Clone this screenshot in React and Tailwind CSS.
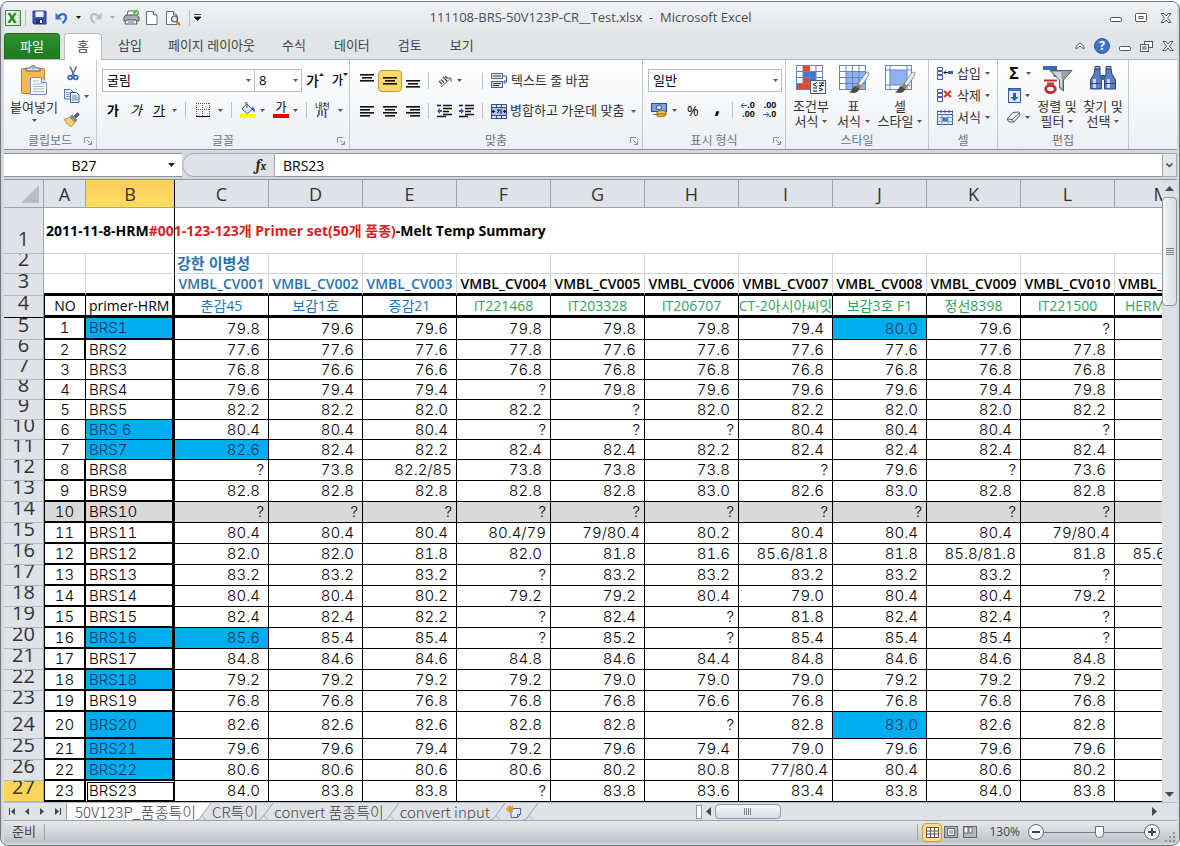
import React from 'react';

const COLUMNS = ['A', 'B', 'C', 'D', 'E', 'F', 'G', 'H', 'I', 'J', 'K', 'L', 'M'];

const LINES = ['001', '002', '003', '004', '005', '006', '007', '008', '009', '010', '011'];

const VARIETIES = ['춘감45', '보감1호', '증감21', 'IT221468', 'IT203328', 'IT206707', 'CT-2아시아씨잇', '보감3호 F1', '정선8398', 'IT221500', 'HERM'];

// name, highlighted, values for C..M ("*" marks a highlighted value)
const PRIMERS = [
  ['BRS1', true, '79.8 79.6 79.6 79.8 79.8 79.8 79.4 80.0* 79.6 ?'],
  ['BRS2', false, '77.6 77.6 77.6 77.8 77.6 77.6 77.6 77.6 77.6 77.8'],
  ['BRS3', false, '76.8 76.6 76.6 76.8 76.8 76.8 76.8 76.8 76.8 76.8'],
  ['BRS4', false, '79.6 79.4 79.4 ? 79.8 79.6 79.6 79.6 79.4 79.8'],
  ['BRS5', false, '82.2 82.2 82.0 82.2 ? 82.0 82.2 82.0 82.0 82.2'],
  ['BRS 6', true, '80.4 80.4 80.4 ? ? ? 80.4 80.4 80.4 ?'],
  ['BRS7', true, '82.6* 82.4 82.2 82.4 82.4 82.2 82.4 82.4 82.4 82.4'],
  ['BRS8', false, '? 73.8 82.2/85 73.8 73.8 73.8 ? 79.6 ? 73.6'],
  ['BRS9', false, '82.8 82.8 82.8 82.8 82.8 83.0 82.6 83.0 82.8 82.8'],
  ['BRS10', false, '? ? ? ? ? ? ? ? ? ?'],
  ['BRS11', false, '80.4 80.4 80.4 80.4/79 79/80.4 80.2 80.4 80.4 80.4 79/80.4'],
  ['BRS12', false, '82.0 82.0 81.8 82.0 81.8 81.6 85.6/81.8 81.8 85.8/81.8 81.8 85.6/81.8'],
  ['BRS13', false, '83.2 83.2 83.2 ? 83.2 83.2 83.2 83.2 83.2 ?'],
  ['BRS14', false, '80.4 80.4 80.2 79.2 79.2 80.4 79.0 80.4 80.4 79.2'],
  ['BRS15', false, '82.4 82.4 82.2 ? 82.4 ? 81.8 82.4 82.4 ?'],
  ['BRS16', true, '85.6* 85.4 85.4 ? 85.2 ? 85.4 85.4 85.4 ?'],
  ['BRS17', false, '84.8 84.6 84.6 84.8 84.6 84.4 84.8 84.6 84.6 84.8'],
  ['BRS18', true, '79.2 79.2 79.2 79.2 79.0 79.0 79.0 79.2 79.2 79.2'],
  ['BRS19', false, '76.8 76.8 76.8 76.8 76.8 76.6 76.8 76.8 76.8 76.8'],
  ['BRS20', true, '82.6 82.6 82.6 82.8 82.8 ? 82.8 83.0* 82.6 82.8'],
  ['BRS21', true, '79.6 79.6 79.4 79.2 79.6 79.4 79.0 79.6 79.6 79.6'],
  ['BRS22', true, '80.6 80.6 80.6 80.6 80.2 80.8 77/80.4 80.4 80.6 80.2'],
  ['BRS23', false, '84.0 83.8 83.8 ? 83.8 83.6 83.4 83.8 84.0 83.8'],
];

const rowHeight = (row) => {
  if (row === 5) return 'h-[22px]';
  if (row >= 6 && row <= 11) return 'h-[20px]';
  if (row === 24) return 'h-[27px]';
  return 'h-[21px]';
};

const Caret = ({ className = '', color = '#555' }) => (
  <svg className={`shrink-0 ${className}`} width="5" height="3" viewBox="0 0 5 3"><path d="M0 0h5L2.5 3z" fill={color} /></svg>
);

const Sep = ({ className = '' }) => <span className={`w-px h-4 shrink-0 bg-[#b9bfc8] ${className}`} />;

const IconButton = ({ label, className = '', caret, children }) => (
  <button type="button" aria-label={label} className={`flex items-center shrink-0 gap-1 ${className}`}>
    {children}
    {caret && <Caret />}
  </button>
);

/* ---------- icons ---------- */

const ExcelIcon = () => (
  <svg width="16" height="16" viewBox="0 0 16 16">
    <rect x=".5" y=".5" width="15" height="15" fill="#e8f3e4" stroke="#3c8a3c" />
    <rect x="10" y="2" width="4" height="12" fill="#fff" stroke="#8abf86" strokeWidth=".6" />
    <path d="M10 5h4M10 8h4M10 11h4" stroke="#8abf86" strokeWidth=".6" />
    <path d="M2.5 3h3l1.7 3L9 3h2.6L8.6 8l3.2 5H8.6L7 10 5.2 13H2.4l3.2-5z" fill="#2c8a35" />
  </svg>
);

const SaveIcon = () => (
  <svg width="15" height="15" viewBox="0 0 15 15">
    <path d="M1 1h12.5l.5 1v12H2l-1-1z" fill="#4259b8" stroke="#27348a" />
    <rect x="3.5" y="1.5" width="8" height="5.5" fill="#eef3ff" />
    <rect x="4" y="9" width="7" height="5" fill="#26337c" />
    <rect x="8" y="10" width="2" height="3" fill="#fff" />
  </svg>
);

const UndoIcon = ({ flip, color = '#3d6fc4' }) => (
  <svg width="13" height="13" viewBox="0 0 13 13" className={flip ? '-scale-x-100' : ''}>
    <path d="M3 6.5C5 2 11 2 11 6.5c0 2.5-1.500 4-3.500 5.500" fill="none" stroke={color} strokeWidth="2.400" />
    <path d="M.5 1.500v7h6.500z" fill={color} />
  </svg>
);

const PrintIcon = () => (
  <svg width="17" height="17" viewBox="0 0 17 17">
    <path d="M4 7l1-5h7l-1 5z" fill="#fff" stroke="#666" />
    <path d="M1 8l2-2h11l2 2v4H1z" fill="#a9adb5" stroke="#555" />
    <path d="M3 11h10l1 4H2z" fill="#fff" stroke="#555" />
    <path d="M4.500 13h7" stroke="#3d6fc4" />
    <circle cx="13" cy="4" r="3" fill="#58b04d" />
    <path d="M11.500 4l1.200 1.200L14.700 3" stroke="#fff" fill="none" />
  </svg>
);

const PageIcon = ({ search }) => (
  <svg width={search ? 15 : 12} height="16" viewBox={search ? '0 0 15 16' : '0 0 12 16'}>
    <path d="M.5 1.500h7l3.500 3.500v9.500H.5z" fill="#fff" stroke="#5d6f8c" />
    <path d="M7.500 1.500v3.500H11" fill="#d9e3f2" stroke="#5d6f8c" />
    {search && (
      <>
        <circle cx="8.500" cy="9" r="3" fill="#dbe9f8" stroke="#555" strokeWidth="1.200" />
        <path d="M10.700 11.300l3.300 3.700" stroke="#b57a32" strokeWidth="2" />
      </>
    )}
  </svg>
);

const PasteIcon = () => (
  <svg width="28" height="31" viewBox="0 0 28 31">
    <rect x="1.500" y="3.500" width="23" height="25" rx="1" fill="#efb95b" stroke="#b98734" />
    <path d="M6 6V3h4c0-3 6-3 6 0h4v3z" fill="#d7dbe2" stroke="#5f6674" />
    <circle cx="13" cy="2.700" r="1" fill="#fff" stroke="#5f6674" strokeWidth=".6" />
    <path d="M10.500 12.500h11l5 5v12h-16z" fill="#fff" stroke="#6d8fc0" />
    <path d="M21.500 12.500v5h5" fill="#dce8f7" stroke="#6d8fc0" />
    <path d="M13 16h6M13 19h11M13 21.500h11M13 24h11M13 26.500h11" stroke="#9db4d6" />
  </svg>
);

const CutIcon = () => (
  <svg width="12" height="15" viewBox="0 0 12 15">
    <path d="M3 .5l4.200 9M9.500 .5L5 9.500" stroke="#566a8c" strokeWidth="1.600" fill="none" />
    <circle cx="3.200" cy="11.500" r="2" fill="none" stroke="#2d5cb5" strokeWidth="1.600" />
    <circle cx="8.800" cy="11.500" r="2" fill="none" stroke="#2d5cb5" strokeWidth="1.600" />
  </svg>
);

const CopyIcon = () => (
  <svg width="16" height="14" viewBox="0 0 16 14">
    <path d="M.5 .5h6l2.500 2.500v7H.5z" fill="#fff" stroke="#4a76b8" />
    <path d="M2 3.500h4M2 5.500h5M2 7.500h5" stroke="#7fa0d2" />
    <path d="M6.500 3.500h6l2.500 2.500v7.500H6.500z" fill="#fff" stroke="#2d5ca8" />
    <path d="M8 7h5M8 9h6M8 11h6" stroke="#4a76b8" />
  </svg>
);

const BrushIcon = () => (
  <svg width="16" height="15" viewBox="0 0 16 15">
    <path d="M10 4l3.500-3.500 2 2L12 6z" fill="#4c5f9a" stroke="#333f70" strokeWidth=".6" />
    <path d="M8 3l5 5-2 2-5-5z" fill="#8a8f9c" stroke="#555" strokeWidth=".6" />
    <path d="M6 5.500L.5 7c1 4 4 7 7 7.500l3.500-4z" fill="#f1d469" stroke="#a1852c" strokeWidth=".8" />
  </svg>
);

const BorderIcon = () => (
  <svg width="14" height="14" viewBox="0 0 14 14">
    <path d="M.5 0v13M6.500 0v13M13.500 0v13M0 .5h14M0 6.500h14" stroke="#555" strokeDasharray="1 1" fill="none" shapeRendering="crispEdges" />
    <path d="M0 13.500h14" stroke="#000" />
  </svg>
);

const BucketIcon = () => (
  <svg width="16" height="16" viewBox="0 0 16 16">
    <path d="M6.500 2l6 5-5 4.500L2 7z" fill="#dfeaf8" stroke="#39598f" />
    <path d="M7 6V1.500C7 0 5 0 5 1.500" fill="none" stroke="#39598f" />
    <path d="M12 5c3 1 3 3 2.500 6-.8-2-1.500-3-3-3.500z" fill="#2d5cb5" />
    <rect y="12" width="16" height="4" fill="#ff0" />
  </svg>
);

const Lines = ({ rows, h = 13, w = 14 }) => (
  <svg width={w} height={h} viewBox={`0 0 ${w} ${h}`}>
    {rows.map(([x, y, len]) => <rect key={y} x={x} y={y} width={len} height="1.600" fill="#111" />)}
  </svg>
);

const IndentIcon = ({ right }) => (
  <svg width="15" height="14" viewBox="0 0 15 14">
    <path d="M0 1.500h4M6 1.500h9M6 4.500h9M6 7.500h6M6 10.500h9M0 12.500h9" stroke="#111" strokeWidth="1.500" />
    <path d={right ? 'M0 6h2V4l3 3-3 3V8H0z' : 'M5 6H3V4L0 7l3 3V8h2z'} fill="#2d5cb5" />
  </svg>
);

const OrientIcon = () => (
  <svg width="16" height="14" viewBox="0 0 16 14">
    <path d="M2 7l3 3M4 5.500l3 3M6 3l4 4M8 2l2.500 2.500" stroke="#444" strokeWidth="1.300" />
    <path d="M4 13L14 4M14 4v4M14 4h-4" stroke="#667" fill="none" />
  </svg>
);

const WrapIcon = () => (
  <svg width="17" height="16" viewBox="0 0 17 16">
    <rect x=".5" y=".5" width="11" height="5" fill="#dfe9f6" stroke="#52627f" />
    <rect x=".5" y="8.500" width="11" height="6" fill="#dfe9f6" stroke="#52627f" />
    <path d="M2 3h8M2 10.500h8M2 12.500h6" stroke="#333" />
    <path d="M12 3h3.500v6H13M14.500 7l-2 2 2 2" stroke="#2d5cb5" fill="none" />
  </svg>
);

const MergeIcon = () => (
  <svg width="16" height="15" viewBox="0 0 16 15">
    <rect x=".5" y=".5" width="15" height="14" fill="#dfe9f6" stroke="#2f4d85" />
    <path d="M1 4h14v7H1z" fill="#a9c3ea" />
    <path d="M0 3.500h16M0 11.500h16M5.500 0v3M10.500 0v3M5.500 12v3M10.500 12v3" stroke="#2f4d85" />
    <path d="M1 7.500h3M12 7.500h3M3 6l-2 1.500 2 1.500M13 6l2 1.500-2 1.500" stroke="#111" fill="none" />
    <path d="M6 6h2.500L6.500 9M10 5v5" stroke="#111" fill="none" />
  </svg>
);

const MoneyIcon = () => (
  <svg width="17" height="16" viewBox="0 0 17 16">
    <rect x=".5" y="1.500" width="15" height="8" fill="#7da0dc" stroke="#274a91" />
    <circle cx="8" cy="5.500" r="2.500" fill="#cfdef5" stroke="#274a91" />
    <path d="M6 10c2-2 8-2 9 0v3c-2 2-7 2-9 1z" fill="#e9be4b" stroke="#94701b" />
    <path d="M2 12.500h6M6 12h9" stroke="#94701b" />
  </svg>
);

const GridIcon = ({ kind }) => (
  <svg width="32" height="30" viewBox="0 0 32 30">
    <rect x="1.500" y=".5" width="26" height="24" fill="#fff" stroke="#5d86c4" />
    {kind === 'cond' && <path d="M8 1h7v6H8zM8 13h7v6H8zM2 19h13v5H2z" fill="#e8412c" />}
    {kind === 'cond' && <path d="M8 7h13v6H8zM15 13h6v6h-6z" fill="#4674cf" />}
    {kind === 'table' && <path d="M8 7h19v17H8z" fill="#8fb2ec" />}
    {kind === 'cell' && <path d="M6 5h17v15H6z" fill="#8fb2ec" />}
    {kind !== 'cell' && <path d="M1 6.500h27M1 12.500h27M1 18.500h27M8 0v25M14.500 0v25M21 0v25" stroke="#5d86c4" />}
    {kind === 'cell' && <path d="M1 5h27M1 20h27M6 0v25M23 0v25" stroke="#5d86c4" />}
    {kind === 'cond' ? (
      <>
        <rect x="15.500" y="15.500" width="15" height="13" fill="#f4f6f9" stroke="#4d5a70" />
        <path d="M22 17.500l-4 2 4 2M18 23h4M18 26h4M24 18h5M24 20.500h5M28 17l-3 5M24 23l4 1.500-4 1.500" stroke="#222" fill="none" />
      </>
    ) : (
      <>
        <path d="M30 7c2 1 1 4-7 14l-3-2C26 10 28 7 30 7z" fill="#e9ecf2" stroke="#66708a" strokeWidth=".8" />
        <path d="M20 18.500l3.500 2.500-2 3-3.500-3z" fill="#b67a3a" />
        <path d="M18 21c-4 0-3 5-7 6 4 2 9 1 10.500-3z" fill="#4a4a48" />
      </>
    )}
  </svg>
);

const CellsIcon = ({ kind }) => (
  <svg width="16" height="15" viewBox="0 0 16 15">
    {kind === 'format' ? (
      <>
        <path d="M.5 3.500V.5M15.500 3.500V.5M0 1.500h16M4 0v3M8 0v3M12 0v3" stroke="#345b9e" />
        <rect x=".5" y="4.500" width="15" height="10" fill="#e9f0fb" stroke="#345b9e" />
        <path d="M5 7h6v5H5z" fill="#4674cf" />
        <path d="M0 7.500h16M0 11.500h16M5 4v11M11 4v11" stroke="#7f9cd0" />
      </>
    ) : (
      <>
        <path d="M.5 1.500h5v3h-5zM.5 5.500h5v3h-5zM.5 9.500h5v4h-5z" fill="#fff" stroke="#3d5f9c" />
        {kind === 'insert' && <path d="M7 6.500h4M9 4.500L7 6.500l2 2" stroke="#111" fill="none" />}
        {kind === 'insert' && <rect x="11" y="5" width="5" height="3" fill="#3d5f9c" />}
        {kind === 'delete' && <path d="M7 3l7 6M14 3L7 9" stroke="#df3a1d" strokeWidth="2.200" />}
      </>
    )}
  </svg>
);

const FillIcon = () => (
  <svg width="13" height="15" viewBox="0 0 13 15">
    <rect x=".5" y=".5" width="12" height="14" fill="#dfe9f8" stroke="#345b9e" />
    <rect x="1" y="1" width="11" height="2" fill="#4674cf" />
    <path d="M5 5h3v4h2.500l-4 4-4-4H5z" fill="#2d5cb5" />
  </svg>
);

const EraserIcon = () => (
  <svg width="15" height="13" viewBox="0 0 15 13">
    <path d="M7 1.500L13 1l1 3-6 7H3L1 8z" fill="#f5f7fa" stroke="#555f72" />
    <path d="M1 8l5 .5L8 11M6 8.500L13.500 2" stroke="#555f72" fill="none" />
  </svg>
);

const SortIcon = () => (
  <svg width="31" height="30" viewBox="0 0 31 30">
    <path d="M1 1h14v11h-3.500V5H1z" fill="#3c66b8" />
    <path d="M2 15.500h13M5 18.500h7" stroke="#b5342c" strokeWidth="2.200" />
    <ellipse cx="8.500" cy="24" rx="4.800" ry="3.600" fill="none" stroke="#b5342c" strokeWidth="2.800" />
    <path d="M8 5.500h22L21.500 15v11l-4-3v-8z" fill="#9ba0a8" stroke="#555b66" />
    <path d="M11 7h8l1 8v8l-2-1.500V15z" fill="#d3d6dc" />
  </svg>
);

const BinocularsIcon = () => (
  <svg width="28" height="26" viewBox="0 0 28 26">
    <path d="M6 4h5v5l1.500 5v10h-11V15L5 9zM17 4h5l1 5 3.500 6v9h-11V14L17 9z" fill="#5c80bf" stroke="#2a447c" />
    <path d="M6 1.500h5V4H6zM17 1.500h5V4h-5z" fill="#9fb8e2" stroke="#2a447c" />
    <path d="M12 10h4v5h-4z" fill="#3d5f9c" />
    <path d="M4 14h3v9H4zM18 14h3v9h-3z" fill="#c5d5f0" />
    <path d="M1.500 18.500h11M15.500 18.500h11" stroke="#2a447c" />
  </svg>
);

const Launcher = ({ label }) => (
  <button type="button" aria-label={label} className="absolute right-1 bottom-1">
    <svg width="8" height="8" viewBox="0 0 8 8"><path d="M.5 6V.5H6M3 3l4 4M7.500 4v3.500H4" fill="none" stroke="#8b929d" /></svg>
  </button>
);

const CloseGlyph = () => (
  <svg width="12" height="10" viewBox="0 0 12 10">
    <path d="M1 .5h3l2 2.500L8 .5h3L7.500 5 11 9.500H8L6 7 4 9.500H1L4.500 5z" fill="#fff" stroke="#555" />
  </svg>
);

const MinGlyph = () => <svg width="12" height="5" viewBox="0 0 12 5"><rect x=".5" y=".5" width="11" height="4" rx="1" fill="#fff" stroke="#555" /></svg>;

/* ---------- chrome ---------- */

const TitleBar = () => (
  <header className="relative h-[31px] shrink-0 flex items-center pl-[1px] pr-[5px] bg-linear-to-b from-[#f1f2f4] to-[#e3e6e9]">
    <ExcelIcon />
    <Sep className="ml-1" />
    <IconButton label="저장" className="ml-[6px]"><SaveIcon /></IconButton>
    <IconButton label="실행 취소" className="ml-2"><UndoIcon /><Caret color="#111" className="ml-1" /></IconButton>
    <IconButton label="다시 실행" className="ml-2"><UndoIcon flip color="#b9bec6" /><Caret color="#aaa" className="ml-1" /></IconButton>
    <IconButton label="인쇄" className="ml-2"><PrintIcon /></IconButton>
    <IconButton label="새로 만들기" className="ml-[6px]"><PageIcon /></IconButton>
    <IconButton label="인쇄 미리 보기" className="ml-2"><PageIcon search /></IconButton>
    <Sep className="ml-2" />
    <IconButton label="빠른 실행 도구 모음" className="ml-1">
      <svg width="7" height="7" viewBox="0 0 7 7"><path d="M0 .5h7M0 3h7L3.500 6.500z" fill="#111" stroke="#111" strokeWidth=".8" /></svg>
    </IconButton>
    <h1 className="absolute inset-x-0 text-center text-[13px] text-[#4a4d52] whitespace-pre pointer-events-none">111108-BRS-50V123P-CR__Test.xlsx  -  Microsoft Excel</h1>
    <div className="ml-auto flex items-center gap-[13px]">
      <button type="button" aria-label="최소화" className="pt-1"><MinGlyph /></button>
      <button type="button" aria-label="최대화">
        <svg width="12" height="9" viewBox="0 0 12 9"><rect x=".5" y=".5" width="11" height="8" rx="1" fill="#fff" stroke="#555" /><rect x="4" y="3.500" width="4" height="2" fill="none" stroke="#555" /></svg>
      </button>
      <button type="button" aria-label="닫기"><CloseGlyph /></button>
    </div>
  </header>
);

const TabRow = () => (
  <nav className="h-[26px] shrink-0 flex items-stretch pr-[3px] bg-[#e2e5e8] text-[13px] text-[#444]">
    <button type="button" className="w-14 rounded-t-sm text-white bg-linear-to-b from-[#2f8f2c] to-[#1e7a1e] border border-b-0 border-[#1b6a1b]">파일</button>
    <button type="button" className="ml-1 w-[38px] -mb-px z-10 rounded-t-sm bg-white border border-b-0 border-[#b6babf]">홈</button>
    <div className="ml-[3px] flex">
      {['삽입', '페이지 레이아웃', '수식', '데이터', '검토', '보기'].map((t) => (
        <button key={t} type="button" className="px-[13px] [&:nth-child(n+3)]:px-[14px]">{t}</button>
      ))}
    </div>
    <div className="ml-auto flex items-center gap-[9px]">
      <button type="button" aria-label="리본 최소화">
        <svg width="10" height="8" viewBox="0 0 10 8"><path d="M1 4.500L5 1l4 3.500V7L5 4 1 7z" fill="#fff" stroke="#555" /></svg>
      </button>
      <button type="button" aria-label="도움말" className="size-4 rounded-full bg-[#3b75c4] border border-[#2a58a0] text-white text-[12px] leading-none font-bold">?</button>
      <button type="button" aria-label="창 최소화" className="pt-1"><MinGlyph /></button>
      <button type="button" aria-label="창 복원">
        <svg width="13" height="11" viewBox="0 0 13 11"><rect x="4.500" y=".5" width="8" height="6" fill="#fff" stroke="#555" /><rect x=".5" y="3.500" width="8" height="7" fill="#fff" stroke="#555" /><rect x="3" y="6" width="3" height="2" fill="none" stroke="#555" /></svg>
      </button>
      <button type="button" aria-label="창 닫기"><CloseGlyph /></button>
    </div>
  </nav>
);

const Group = ({ title, className, launcher, children }) => (
  <section className={`relative shrink-0 flex flex-col border-r border-[#c4c8ce] ${className}`}>
    <div className="flex-1 min-h-0">{children}</div>
    <h2 className="h-4 text-center text-[12px] leading-4 text-[#6b7584]">{title}</h2>
    {launcher && <Launcher label={`${title} 설정`} />}
  </section>
);

const Combo = ({ label, value, className }) => (
  <div className={`relative flex h-[23px] ${className}`}>
    <select aria-label={label} defaultValue={value} className="w-full appearance-none bg-white border border-[#b9bdc3] pl-1 text-[13px] text-black">
      <option>{value}</option>
    </select>
    <Caret className="absolute right-1 top-[10px] pointer-events-none" />
  </div>
);

const BigButton = ({ icon, top, bottom, className = '' }) => (
  <button type="button" className={`flex flex-col items-center ${className}`}>
    {icon}
    <span className="mt-1 leading-[15px]">{top}</span>
    <span className="leading-[15px] flex items-center gap-1">{bottom}<Caret /></span>
  </button>
);

const Ribbon = () => (
  <div className="h-[91px] shrink-0 flex border-y border-[#b1b5ba] border-b-[#8e9299] bg-linear-to-b from-white to-[#eceff3] text-[13px] text-[#333] whitespace-nowrap">
    <Group title="클립보드" className="w-[93px]" launcher>
      <div className="flex pl-[6px] pt-[5px]">
        <button type="button" className="w-12 flex flex-col items-center leading-4">
          <PasteIcon />
          <span className="mt-[3px]">붙여넣기</span>
          <Caret className="mt-1" />
        </button>
        <div className="flex flex-col gap-[7px] pl-[6px]">
          <IconButton label="잘라내기" className="h-4 pl-[3px]"><CutIcon /></IconButton>
          <IconButton label="복사" className="h-4" caret><CopyIcon /></IconButton>
          <IconButton label="서식 복사" className="h-4"><BrushIcon /></IconButton>
        </div>
      </div>
    </Group>

    <Group title="글꼴" className="w-[253px]" launcher>
      <div className="flex items-center pt-[9px] pl-[5px]">
        <Combo label="글꼴 이름" value="굴림" className="w-[153px]" />
        <Combo label="글꼴 크기" value="8" className="w-12 -ml-px" />
        <IconButton label="글꼴 크기 크게" className="ml-1 text-black"><span className="text-[14px] font-medium leading-none">가</span><svg className="-ml-1 mb-3" width="5" height="3"><path d="M0 3h5L2.500 0z" fill="#223" /></svg></IconButton>
        <IconButton label="글꼴 크기 작게" className="ml-2 text-black"><span className="text-[12px] font-medium leading-none">가</span><Caret className="-ml-1 mb-3" color="#223" /></IconButton>
      </div>
      <div className="flex items-center h-5 mt-2 pl-[10px] text-black leading-none">
        <button type="button" className="font-bold">가</button>
        <button type="button" className="ml-[11px] italic">가</button>
        <button type="button" className="ml-[11px] flex items-center gap-[7px]"><u>가</u><Caret /></button>
        <Sep className="ml-2" />
        <IconButton label="테두리" className="ml-[10px] gap-2" caret><BorderIcon /></IconButton>
        <Sep className="ml-2" />
        <IconButton label="채우기 색" className="ml-2" caret><BucketIcon /></IconButton>
        <IconButton label="글꼴 색" className="ml-2" caret><span className="w-4 text-center border-b-4 border-[#e60000] text-[12px] leading-3">가</span></IconButton>
        <Sep className="ml-2" />
        <button type="button" aria-label="윗주 필드" className="ml-2 flex items-center gap-2">
          <span className="flex flex-col items-center text-[8px] leading-[8px]">내천<svg width="10" height="8"><path d="M2 0v4L0 7M5 0v6M8.500 0v8" stroke="#2d4f9c" strokeWidth="1.500" fill="none" /></svg></span>
          <Caret />
        </button>
      </div>
    </Group>

    <Group title="맞춤" className="w-[293px]" launcher>
      <div className="flex items-center pl-2 pt-[9px] h-8">
        <IconButton label="위쪽 맞춤" className="px-[2px]"><Lines h={15} rows={[[0, 1, 14], [2, 4, 10], [0, 7, 14]]} /></IconButton>
        <IconButton label="가운데 맞춤" className="ml-[2px] w-6 h-[22px] justify-center rounded-sm border border-[#c29a3c] bg-[#ffd968]"><Lines rows={[[0, 3, 14], [2, 6, 10], [0, 9, 14]]} /></IconButton>
        <IconButton label="아래쪽 맞춤" className="ml-[4px]"><Lines h={15} rows={[[0, 7, 14], [2, 10, 10], [0, 13, 14]]} /></IconButton>
        <Sep className="ml-2" />
        <IconButton label="방향" className="ml-2" caret><OrientIcon /></IconButton>
        <Sep className="ml-[20px]" />
        <button type="button" className="ml-2 flex items-center gap-[3px]"><WrapIcon />텍스트 줄 바꿈</button>
      </div>
      <div className="flex items-center pl-2 mt-[7px] h-6">
        <IconButton label="왼쪽 맞춤" className="px-[2px]"><Lines rows={[[0, 1, 14], [0, 4, 10], [0, 7, 14], [0, 10, 10]]} /></IconButton>
        <IconButton label="가로 가운데 맞춤" className="ml-[4px] px-[3px]"><Lines rows={[[0, 1, 14], [2, 4, 10], [0, 7, 14], [2, 10, 10]]} /></IconButton>
        <IconButton label="오른쪽 맞춤" className="ml-[6px]"><Lines rows={[[0, 1, 14], [4, 4, 10], [0, 7, 14], [4, 10, 10]]} /></IconButton>
        <Sep className="ml-2" />
        <IconButton label="내어쓰기" className="ml-2"><IndentIcon /></IconButton>
        <IconButton label="들여쓰기" className="ml-[7px]"><IndentIcon right /></IconButton>
        <Sep className="ml-2" />
        <button type="button" className="ml-2 flex items-center gap-[3px]"><MergeIcon />병합하고 가운데 맞춤<Caret className="ml-1" /></button>
      </div>
    </Group>

    <Group title="표시 형식" className="w-[143px]" launcher>
      <div className="pl-[5px] pt-[9px]">
        <Combo label="표시 형식" value="일반" className="w-[134px]" />
      </div>
      <div className="flex items-center pl-2 mt-[6px] h-6 text-black">
        <IconButton label="회계 표시 형식" caret><MoneyIcon /></IconButton>
        <button type="button" aria-label="백분율" className="ml-[10px] text-[14px]">%</button>
        <button type="button" aria-label="쉼표 스타일" className="ml-4 mb-2 text-[20px] leading-none font-bold">,</button>
        <Sep className="ml-3" />
        <button type="button" aria-label="자릿수 늘림" className="ml-2 flex flex-col items-end text-[9px] leading-[9px] font-bold [font-family:'Liberation_Sans',sans-serif]"><span className="flex items-center"><svg width="6" height="5"><path d="M0 2.500h6M2.500 0L0 2.500 2.500 5" stroke="#2d5cb5" fill="none" /></svg>.0</span><span>.00</span></button>
        <button type="button" aria-label="자릿수 줄임" className="ml-2 flex flex-col items-end text-[9px] leading-[9px] font-bold [font-family:'Liberation_Sans',sans-serif]"><span>.00</span><span className="flex items-center"><svg width="6" height="5"><path d="M0 2.500h6M3.500 0L6 2.500 3.500 5" stroke="#2d5cb5" fill="none" /></svg>.0</span></button>
      </div>
    </Group>

    <Group title="스타일" className="w-[143px]">
      <div className="flex justify-between pl-[5px] pr-1 pt-[5px]">
        <BigButton className="w-10" icon={<GridIcon kind="cond" />} top="조건부" bottom="서식" />
        <BigButton className="w-10" icon={<GridIcon kind="table" />} top="표" bottom="서식" />
        <BigButton className="w-12" icon={<GridIcon kind="cell" />} top="셀" bottom="스타일" />
      </div>
    </Group>

    <Group title="셀" className="w-[69px]">
      <div className="flex flex-col gap-[6px] pl-2 pt-[5px] leading-4">
        <button type="button" className="flex items-center gap-[4px]"><CellsIcon kind="insert" />삽입<Caret /></button>
        <button type="button" className="flex items-center gap-[4px]"><CellsIcon kind="delete" />삭제<Caret /></button>
        <button type="button" className="flex items-center gap-[4px]"><CellsIcon kind="format" />서식<Caret /></button>
      </div>
    </Group>

    <Group title="편집" className="w-[131px]">
      <div className="flex pl-2 pt-[5px]">
        <div className="flex flex-col gap-[6px]">
          <IconButton label="합계" className="h-4" caret><span className="w-4 text-center text-[16px] leading-none font-bold text-black">Σ</span></IconButton>
          <IconButton label="채우기" className="h-4 pl-[2px]" caret><FillIcon /></IconButton>
          <IconButton label="지우기" className="h-4" caret><EraserIcon /></IconButton>
        </div>
        <BigButton className="ml-1 w-11" icon={<SortIcon />} top="정렬 및" bottom="필터" />
        <BigButton className="ml-[2px] w-11 [&>svg]:mb-1" icon={<BinocularsIcon />} top="찾기 및" bottom="선택" />
      </div>
    </Group>
  </div>
);

const FormulaBar = () => (
  <div className="h-[29px] shrink-0 pt-[3px] pb-[2px] flex bg-[#d5d8dd] text-[14px] text-black">
    <div className="w-[178px] flex items-center bg-white border-y border-[#8e9299]">
      <input aria-label="이름 상자" defaultValue="B27" className="w-40 text-center outline-none" />
      <button type="button" aria-label="이름 목록" className="pl-1"><svg width="7" height="4"><path d="M0 0h7L3.500 4z" fill="#222" /></svg></button>
    </div>
    <div className="w-[93px] flex items-center justify-end pr-2 rounded-l-full border border-[#a5a9ae] bg-[#dfe2e6]">
      <button type="button" aria-label="함수 삽입" className="font-serif italic font-bold text-[15px] leading-none text-[#222]">f<span className="text-[11px]">x</span></button>
    </div>
    <input aria-label="수식 입력줄" defaultValue="BRS23" className="flex-1 min-w-0 pl-2 bg-white border-y border-[#8e9299] outline-none" />
    <button type="button" aria-label="수식 입력줄 확장" className="w-[15px] flex items-center justify-center border border-[#a5a9ae] bg-[#e4e6ea]">
      <svg width="7" height="5"><path d="M.5 .5l3 3 3-3" stroke="#444" strokeWidth="1.500" fill="none" /></svg>
    </button>
  </div>
);

/* ---------- sheet ---------- */

const RowHead = ({ n, height, active, frozen }) => (
  <th scope="row" className={`p-0 border-r border-b border-r-[#9da3ab] ${frozen ? 'border-b-black' : 'border-b-[#b4b9c1]'} ${active ? 'bg-[#ffd558]' : 'bg-[#dfe2e7]'}`}>
    <div className={`${height} -mb-px flex items-end justify-center overflow-hidden text-[20px] leading-[30px] font-normal text-[#333]`}>{n}</div>
  </th>
);

const PrimerRow = ({ index, name, marked, values }) => {
  const row = index + 5;
  const height = rowHeight(row);
  const thickBottom = row === 5 || row >= 12;
  const thickSide = row < 7 || row >= 12;
  const grey = name === 'BRS10' ? 'bg-[#d9d9d9]' : '';
  const selected = name === 'BRS23';
  const cells = values.split(' ');
  while (cells.length < 11) cells.push('');
  return (
    <tr className={`${height} ${grey}`}>
      <RowHead n={row} height={height} active={selected} />
      <td className={`p-0 text-center border-black border-l ${thickBottom ? 'border-b-2' : 'border-b'} ${thickSide ? 'border-r-2' : 'border-r'}`}>{index + 1}</td>
      <td className={`p-0 pl-[3px] border-black ${selected ? 'border-r border-b outline-1 outline-black -outline-offset-2' : `border-r-3 ${thickBottom ? 'border-b-2' : 'border-b'}`} ${marked ? 'bg-[#00adef] text-[#123a63]' : ''}`}>{name}</td>
      {cells.map((v, i) => (
        <td key={i} className={`p-0 text-right border-r border-b border-black ${v === '?' || v.includes('/') ? 'pr-1' : 'pr-2'} ${v.endsWith('*') ? 'bg-[#00adef] text-[#123a63]' : ''}`}>
          {v.replace('*', '')}
        </td>
      ))}
    </tr>
  );
};

const Sheet = () => (
  <div className="flex-1 min-w-0 overflow-hidden bg-white">
    <table className="w-[1205px] table-fixed border-separate border-spacing-0 text-[15px] leading-[18px] font-light tabular-nums text-black whitespace-nowrap [font-family:Inter,'Noto_Sans_CJK_KR',sans-serif]">
      <colgroup>
        <col className="w-[40px]" />
        <col className="w-[42px]" />
        <col className="w-[89px]" />
        {LINES.map((l) => <col key={l} className="w-[94px]" />)}
      </colgroup>
      <thead className="[font-family:'Open_Sans','Noto_Sans_CJK_KR',sans-serif]">
        <tr className="h-[28px] text-[18px] leading-[24px] text-[#333]">
          <th className="p-0 bg-[#dfe2e7] border-r border-b border-[#9da3ab]">
            <svg className="ml-auto mr-1" width="18" height="18"><path d="M18 0v18H0z" fill="#b9bdc3" /></svg>
          </th>
          {COLUMNS.map((c) => (
            <th key={c} scope="col" className={`p-0 font-normal border-r border-b border-[#9da3ab] ${c === 'B' ? 'bg-linear-to-b from-[#f9cf62] to-[#ffdb5e] border-r-black' : 'bg-[#dfe2e7]'}`}>{c}</th>
          ))}
        </tr>
      </thead>
      <tbody className="[&_th]:[font-family:'Open_Sans',sans-serif]">
        <tr className="h-[46px] text-[14px] font-bold [font-family:'Open_Sans','Noto_Sans_CJK_KR',sans-serif]">
          <RowHead n={1} height="h-[46px]" />
          <td colSpan={2} className="p-0 pl-[2px] border-b border-b-[#d0d4da] border-r border-r-black">
            <span className="relative">2011-11-8-HRM<span className="text-[#e01b1b]">#001-123-123개 Primer set(50개 품종)</span>-Melt Temp Summary</span>
          </td>
          <td colSpan={11} className="p-0 border-b border-[#d0d4da]" />
        </tr>
        <tr className="h-[20px]">
          <RowHead n={2} height="h-[20px]" />
          <td className="p-0 border-r border-b border-[#d0d4da]" />
          <td className="p-0 border-r border-b border-[#d0d4da] border-r-black" />
          {LINES.map((l, i) => (
            <td key={l} className="p-0 pl-[2px] border-r border-b border-[#d0d4da] font-bold text-[#1f74b1]">{i === 0 ? '강한 이병성' : ''}</td>
          ))}
        </tr>
        <tr className="h-[22px] text-[14px] font-semibold [font-family:'Open_Sans',sans-serif]">
          <RowHead n={3} height="h-[22px]" />
          <td className="p-0 border-r border-[#d0d4da] border-b-3 border-b-black" />
          <td className="p-0 border-r border-b-3 border-black" />
          {LINES.map((l, i) => (
            <td key={l} className={`p-0 text-center border-r border-[#d0d4da] border-b-3 border-b-black ${i < 3 ? 'text-[#1f74b1]' : ''}`}>VMBL_CV{l}</td>
          ))}
        </tr>
        <tr className="h-[22px] text-[14px] font-normal [font-family:'Open_Sans','Noto_Sans_CJK_KR',sans-serif]">
          <RowHead n={4} height="h-[22px]" frozen />
          <td className="p-0 text-center border-l border-r border-b-3 border-black">NO</td>
          <td className="p-0 pl-[3px] border-r-3 border-b-3 border-black">primer-HRM</td>
          {VARIETIES.map((v, i) => (
            <td key={v} className={`p-0 border-r border-b-3 border-black ${i < 3 ? 'text-[#1f74b1]' : 'text-[#2fa35f]'}`}>
              <div className={`flex overflow-hidden ${v === 'HERM' ? 'pl-[10px]' : 'justify-center'}`}><span className="shrink-0">{v}</span></div>
            </td>
          ))}
        </tr>
        {PRIMERS.map(([name, marked, values], i) => (
          <PrimerRow key={name} index={i} name={name} marked={marked} values={values} />
        ))}
        <tr className="h-[21px]">
          <RowHead n={28} height="h-[21px]" />
          <td className="p-0 border-r-2 border-l border-black" />
          <td className="p-0 border-r border-black" />
          {LINES.map((l) => <td key={l} className="p-0 border-r border-black" />)}
        </tr>
      </tbody>
    </table>
  </div>
);

const VScroll = () => (
  <div className="w-[15px] shrink-0 flex flex-col items-center bg-[#dcdfe4]">
    <button type="button" aria-label="위로" className="h-[17px] flex items-center"><svg width="9" height="5"><path d="M0 5h9L4.500 0z" fill="#444a55" /></svg></button>
    <div className="w-full h-[109px] flex items-center justify-center rounded-sm border border-[#8f96a3] bg-linear-to-r from-[#f6f7f9] to-[#d9dce2]">
      <svg width="8" height="8"><path d="M0 .5h8M0 2.500h8M0 4.500h8M0 6.500h8" stroke="#7a818d" /></svg>
    </div>
    <button type="button" aria-label="아래로" className="mt-auto h-4 flex items-center"><svg width="9" height="5"><path d="M0 0h9L4.500 5z" fill="#444a55" /></svg></button>
  </div>
);

const NavButton = ({ label, d }) => (
  <button type="button" aria-label={label}><svg width="7" height="7" viewBox="0 0 7 7"><path d={d} fill="#3c4454" /></svg></button>
);

const Slash = ({ active }) => (
  <svg className="shrink-0" width="16" height="18" viewBox="0 0 16 18">
    {active && <path d="M0 0h15L4 15q-1 2-4 2z" fill="#fff" />}
    <path d="M15 0L4 15q-1 2-4 2" fill="none" stroke="#9da3ab" />
    <path d="M6 12l4 5.500" stroke="#b4b9c1" />
  </svg>
);

const SheetTabs = () => (
  <div className="h-[18px] shrink-0 flex items-center bg-[#dfe2e7] border-t border-[#b4b9c1] text-[#444] [font-family:'Noto_Sans_CJK_KR',sans-serif]">
    <div className="w-[62px] flex items-center justify-between px-[5px]">
      <NavButton label="첫 시트" d="M0 0h1v7H0zM6 0v7L2 3.500z" />
      <NavButton label="이전 시트" d="M5 0v7L1 3.500z" />
      <NavButton label="다음 시트" d="M1 0v7l4-3.500z" />
      <NavButton label="마지막 시트" d="M6 0h1v7H6zM1 0v7l4-3.500z" />
    </div>
    <div className="flex h-full items-stretch text-[15px] leading-[16px] font-light whitespace-nowrap">
      <button type="button" className="pl-2 bg-white border-l border-[#9da3ab] text-[#444]">50V123P_품종특이</button>
      <Slash active />
      <button type="button">CR특이</button>
      <Slash />
      <button type="button">convert 품종특이</button>
      <Slash />
      <button type="button">convert input</button>
      <Slash />
      <button type="button" aria-label="워크시트 삽입" className="flex items-center">
        <svg width="17" height="14" viewBox="0 0 17 14"><path d="M5 3.500h9.500v6l-3 3H5z" fill="#e6eefb" stroke="#4a66a5" /><path d="M14.500 9.500h-3v3" fill="none" stroke="#4a66a5" /><path d="M4 0v8M0 4h8M1.200 1.200l5.600 5.600M6.800 1.200L1.200 6.800" stroke="#e8932e" strokeWidth="1.300" /></svg>
      </button>
      <Slash />
    </div>
    <div className="ml-auto w-[41%] flex items-center h-full">
      <span className="w-[6px] h-[14px] border border-[#8f96a3] bg-white" />
      <button type="button" aria-label="왼쪽으로" className="ml-1"><svg width="5" height="9"><path d="M5 0v9L0 4.500z" fill="#444a55" /></svg></button>
      <div className="ml-1 w-[66px] h-[15px] flex items-center justify-center rounded-sm border border-[#8f96a3] bg-linear-to-b from-[#f6f7f9] to-[#d9dce2]">
        <svg width="8" height="7"><path d="M.5 0v7M2.500 0v7M4.500 0v7M6.500 0v7" stroke="#7a818d" /></svg>
      </div>
      <button type="button" aria-label="오른쪽으로" className="ml-auto mr-5"><svg width="5" height="9"><path d="M0 0v9l5-4.500z" fill="#444a55" /></svg></button>
    </div>
  </div>
);

const ZoomButton = ({ label, d }) => (
  <button type="button" aria-label={label} className="size-4 flex items-center justify-center rounded-full border border-[#666c76] bg-[#f4f5f6]">
    <svg width="8" height="8" viewBox="0 0 8 8"><path d={d} stroke="#444" strokeWidth="2" /></svg>
  </button>
);

const StatusBar = () => (
  <footer className="h-[23px] shrink-0 flex items-center pl-2 bg-linear-to-b from-[#e6e8ea] to-[#bfc3c9] border-t border-[#9da3ab] text-[13px] text-[#444]">
    <span>준비</span>
    <span className="ml-2 w-px h-4 bg-[#9da3ab]" />
    <span className="ml-auto w-px h-4 bg-[#9da3ab]" />
    <button type="button" aria-label="기본" className="ml-1 w-5 h-[19px] flex items-center justify-center rounded-sm border border-[#cf9a2e] bg-[#ffe07a]">
      <svg width="13" height="11"><path d="M.5 .5h12v10H.5zM.5 4h12M.5 7h12M4.500 0v11M8.500 0v11" fill="#fff" stroke="#555" /></svg>
    </button>
    <button type="button" aria-label="페이지 레이아웃" className="ml-[2px]">
      <svg width="14" height="12"><rect x=".5" y=".5" width="13" height="11" fill="#b5b9bf" stroke="#666" /><rect x="3.500" y="2.500" width="7" height="7" fill="#fff" stroke="#666" /><path d="M5 5h4M5 7h4" stroke="#666" /></svg>
    </button>
    <button type="button" aria-label="페이지 나누기 미리 보기" className="ml-[5px]">
      <svg width="14" height="12"><rect x=".5" y=".5" width="13" height="11" fill="#b5b9bf" stroke="#666" /><path d="M1 1h4v6H1zM6 1h3v6H6z" fill="#fff" stroke="#666" /></svg>
    </button>
    <span className="ml-3 mr-2 text-[12px]">130%</span>
    <ZoomButton label="축소" d="M0 4h8" />
    <input type="range" aria-label="확대/축소" min="0" max="100" defaultValue="56" className="w-[100px] h-4 appearance-none bg-transparent [&::-webkit-slider-runnable-track]:h-px [&::-webkit-slider-runnable-track]:bg-[#777d87] [&::-webkit-slider-thumb]:appearance-none [&::-webkit-slider-thumb]:w-[9px] [&::-webkit-slider-thumb]:h-3 [&::-webkit-slider-thumb]:-mt-[6px] [&::-webkit-slider-thumb]:rounded-b-full [&::-webkit-slider-thumb]:border [&::-webkit-slider-thumb]:border-[#666c76] [&::-webkit-slider-thumb]:bg-white" />
    <ZoomButton label="확대" d="M0 4h8M4 0v8" />
    <svg className="ml-1 self-end" width="13" height="12"><path d="M9 1h2v2H9zM5 5h2v2H5zM9 5h2v2H9zM1 9h2v2H1zM5 9h2v2H5zM9 9h2v2H9z" fill="#8d929b" /></svg>
  </footer>
);

export default function App() {
  return (
    <div className="h-screen pt-px bg-white overflow-hidden [font-family:'Open_Sans','Noto_Sans_CJK_KR',sans-serif]">
      <div className="h-full flex flex-col pl-[3px] pr-[2px] pb-[2px] rounded-lg border border-[#70757d] bg-[#d5d8dd] overflow-hidden">
        <TitleBar />
        <TabRow />
        <Ribbon />
        <FormulaBar />
        <main className="flex-1 min-h-0 flex border-t border-[#8e9299]">
          <Sheet />
          <VScroll />
        </main>
        <SheetTabs />
        <StatusBar />
      </div>
    </div>
  );
}
